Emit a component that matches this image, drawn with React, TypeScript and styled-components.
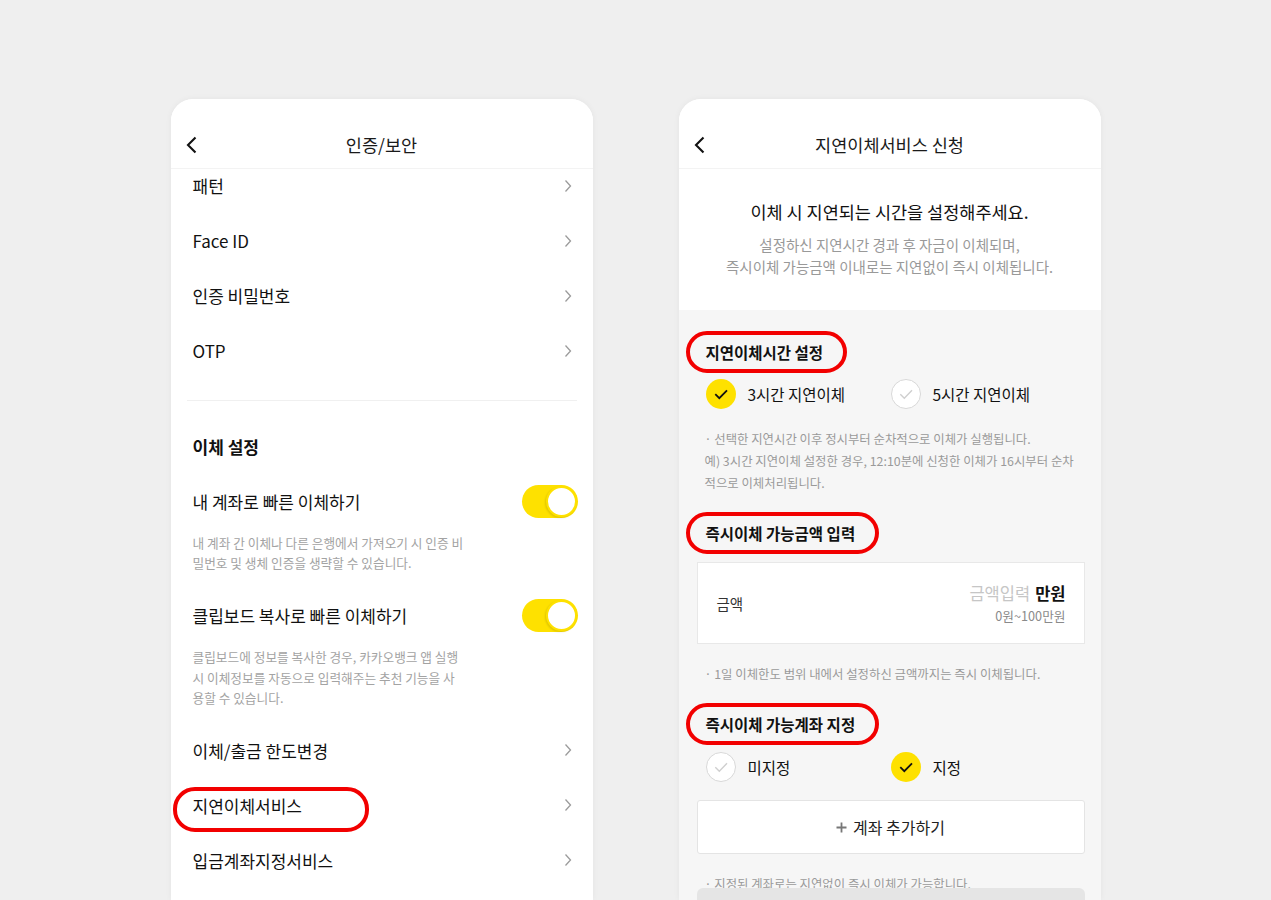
import React from "react";
import styled, { createGlobalStyle } from "styled-components";

const GlobalStyle = createGlobalStyle`
  html, body {
    margin: 0;
    padding: 0;
  }
  body {
    background: #efefef;
    font-family: "Noto Sans CJK KR", "Noto Sans", sans-serif;
    color: #111;
  }
`;

const YELLOW = "#fee100";

const BackIcon = () => (
  <svg width="13" height="18" viewBox="0 0 13 18" fill="none">
    <path d="M10.5 1.5 L3 9 L10.5 16.5" stroke="#111" strokeWidth="2.1" />
  </svg>
);

const ChevronIcon = () => (
  <svg width="8" height="14" viewBox="0 0 8 14" fill="none">
    <path d="M1.5 1.5 L6.5 7 L1.5 12.5" stroke="#9b9b9b" strokeWidth="1.3" />
  </svg>
);

const CheckIcon: React.FC<{ on: boolean }> = ({ on }) => (
  <svg width="30" height="30" viewBox="0 0 30 30" fill="none">
    <circle
      cx="15"
      cy="15"
      r={on ? 15 : 14.5}
      fill={on ? YELLOW : "#fff"}
      stroke={on ? "none" : "#d8d8d8"}
    />
    <path
      d="M9.3 15.2 L13.3 19.2 L21 11.3"
      stroke={on ? "#111" : "#cfcfcf"}
      strokeWidth={on ? 1.8 : 1.4}
    />
  </svg>
);

const PlusIcon = () => (
  <svg width="11" height="11" viewBox="0 0 11 11" fill="none">
    <path d="M5.5 0.5 V10.5 M0.5 5.5 H10.5" stroke="#777" strokeWidth="1.8" />
  </svg>
);

const Page = styled.div`
  display: flex;
  justify-content: center;
  gap: 86px;
  padding-top: 99px;
  height: 900px;
  box-sizing: border-box;
  overflow: hidden;
`;

const Phone = styled.div`
  position: relative;
  width: 422px;
  height: 801px;
  background: #fff;
  border-radius: 22px 22px 0 0;
  box-shadow: 0 0 6px rgba(0, 0, 0, 0.05);
  overflow: hidden;
  display: flex;
  flex-direction: column;
`;

const Header = styled.header`
  position: relative;
  z-index: 1;
  flex-shrink: 0;
  height: 70px;
  box-sizing: border-box;
  padding: 22px 14px 0;
  display: grid;
  grid-template-columns: 1fr auto 1fr;
  align-items: center;
  background: #fff;
  border-bottom: 1px solid #f3f3f3;
`;

const BackButton = styled.span`
  display: flex;
  justify-self: start;
`;

const Title = styled.h1`
  margin: 0;
  font-size: 17.5px;
  font-weight: 400;
  color: #1a1a1a;
`;

const Body = styled.div`
  flex: 1;
  overflow: hidden;
`;

const MenuList = styled.div`
  margin-top: -11px;
`;

const MenuRow = styled.div`
  position: relative;
  height: 55px;
  display: flex;
  align-items: center;
  justify-content: space-between;
  padding: 0 21px 0 22px;
  font-size: 17px;
  color: #111;
`;

const Divider = styled.hr`
  margin: 22px 16px 0;
  border: none;
  border-top: 1px solid #f0f0f0;
`;

const GroupTitle = styled.h2`
  margin: 18px 0 0;
  height: 55px;
  display: flex;
  align-items: center;
  padding: 0 22px;
  font-size: 17px;
  font-weight: 700;
  color: #111;
`;

const ToggleRow = styled(MenuRow)`
  padding-right: 15px;
`;

const Toggle = styled.span`
  position: relative;
  width: 56px;
  height: 33px;
  border-radius: 17px;
  background: ${YELLOW};

  &::after {
    content: "";
    position: absolute;
    right: 1px;
    top: 1px;
    width: 27px;
    height: 27px;
    border-radius: 50%;
    background: #fff;
    border: 2px solid ${YELLOW};
    box-shadow: -1px 1px 2px rgba(0, 0, 0, 0.12);
  }
`;

const Desc = styled.p<{ lh: number; mb: number }>`
  margin: 4px 0 ${(p) => p.mb}px;
  padding: 0 22px;
  font-size: 12.7px;
  line-height: ${(p) => p.lh}px;
  color: #a3a3a3;
`;

const Mark = styled.span`
  position: absolute;
  left: 2px;
  top: 9px;
  width: 196px;
  height: 45px;
  box-sizing: border-box;
  border: 4px solid #f20000;
  border-radius: 22px;
  pointer-events: none;
`;

/* right screen */

const Intro = styled.section`
  padding: 31px 20px 32px;
  text-align: center;
`;

const IntroTitle = styled.p`
  margin: 0;
  font-size: 17.5px;
  line-height: 24px;
  color: #111;
`;

const IntroSub = styled.p`
  margin: 10px 0 0;
  font-size: 14.5px;
  line-height: 22px;
  color: #999;
`;

const Gray = styled.div`
  position: relative;
  flex: 1;
  background: #f6f6f6;
  padding: 21px 16px 0 18px;
  display: flex;
  flex-direction: column;
`;

const SectionTitle = styled.h3<{ mt: number }>`
  align-self: flex-start;
  margin: ${(p) => p.mt}px 0 0 -11px;
  height: 42px;
  box-sizing: border-box;
  padding: 0 20px 0 16px;
  border: 4px solid #f20000;
  border-radius: 22px;
  display: flex;
  align-items: center;
  font-size: 15.5px;
  font-weight: 700;
  color: #111;
`;

const RadioGroup = styled.div<{ mt: number }>`
  margin-top: ${(p) => p.mt}px;
  padding-left: 9px;
  display: flex;
`;

const RadioOption = styled.label`
  width: 185px;
  display: flex;
  align-items: center;
  gap: 12px;
  font-size: 15.5px;
  color: #111;
`;

const Note = styled.p<{ mt: number }>`
  margin: ${(p) => p.mt}px 0 0;
  padding-left: 8px;
  font-size: 12.4px;
  line-height: 22px;
  color: #9a9a9a;
  white-space: nowrap;
`;

const AmountBox = styled.div`
  margin-top: 8px;
  height: 82px;
  box-sizing: border-box;
  background: #fff;
  border: 1px solid #e8e8e8;
  display: flex;
  align-items: center;
  justify-content: space-between;
  padding: 0 18px 0 19px;
`;

const AmountLabel = styled.span`
  font-size: 14.5px;
  color: #333;
`;

const AmountInput = styled.div`
  display: flex;
  flex-direction: column;
  align-items: flex-end;
  gap: 3px;
`;

const AmountValue = styled.span`
  font-size: 16.5px;
  line-height: 22px;
  color: #c6c6c6;

  b {
    margin-left: 5px;
    color: #111;
    font-weight: 700;
  }
`;

const AmountRange = styled.span`
  font-size: 12.7px;
  line-height: 18px;
  color: #8a8a8a;
`;

const AddButton = styled.button`
  margin-top: 18px;
  height: 54px;
  background: #fff;
  border: 1px solid #e4e4e4;
  border-radius: 3px;
  display: flex;
  align-items: center;
  justify-content: center;
  gap: 6px;
  font-family: inherit;
  font-size: 16px;
  color: #222;
`;

const BottomButton = styled.div`
  position: absolute;
  left: 18px;
  right: 16px;
  top: 578px;
  height: 50px;
  border-radius: 6px;
  background: #e5e5e5;
`;

const menuTop = ["패턴", "Face ID", "인증 비밀번호", "OTP"];
const menuBottom = ["이체/출금 한도변경", "지연이체서비스", "입금계좌지정서비스"];

const App: React.FC = () => (
  <>
    <GlobalStyle />
    <Page>
      <Phone>
        <Header>
          <BackButton>
            <BackIcon />
          </BackButton>
          <Title>인증/보안</Title>
        </Header>
        <Body>
          <MenuList>
            {menuTop.map((m) => (
              <MenuRow key={m}>
                {m}
                <ChevronIcon />
              </MenuRow>
            ))}
          </MenuList>
          <Divider />
          <GroupTitle>이체 설정</GroupTitle>
          <ToggleRow>
            내 계좌로 빠른 이체하기
            <Toggle />
          </ToggleRow>
          <Desc lh={20} mb={15}>
            내 계좌 간 이체나 다른 은행에서 가져오기 시 인증 비
            <br />
            밀번호 및 생체 인증을 생략할 수 있습니다.
          </Desc>
          <ToggleRow>
            클립보드 복사로 빠른 이체하기
            <Toggle />
          </ToggleRow>
          <Desc lh={20.5} mb={14}>
            클립보드에 정보를 복사한 경우, 카카오뱅크 앱 실행
            <br />
            시 이체정보를 자동으로 입력해주는 추천 기능을 사
            <br />
            용할 수 있습니다.
          </Desc>
          {menuBottom.map((m) => (
            <MenuRow key={m}>
              {m}
              <ChevronIcon />
              {m === "지연이체서비스" && <Mark />}
            </MenuRow>
          ))}
        </Body>
      </Phone>

      <Phone>
        <Header>
          <BackButton>
            <BackIcon />
          </BackButton>
          <Title>지연이체서비스 신청</Title>
        </Header>
        <Intro>
          <IntroTitle>이체 시 지연되는 시간을 설정해주세요.</IntroTitle>
          <IntroSub>
            설정하신 지연시간 경과 후 자금이 이체되며,
            <br />
            즉시이체 가능금액 이내로는 지연없이 즉시 이체됩니다.
          </IntroSub>
        </Intro>
        <Gray>
          <SectionTitle mt={0}>지연이체시간 설정</SectionTitle>
          <RadioGroup mt={6}>
            <RadioOption>
              <CheckIcon on />
              3시간 지연이체
            </RadioOption>
            <RadioOption>
              <CheckIcon on={false} />
              5시간 지연이체
            </RadioOption>
          </RadioGroup>
          <Note mt={19}>
            · 선택한 지연시간 이후 정시부터 순차적으로 이체가 실행됩니다.
            <br />
            예) 3시간 지연이체 설정한 경우, 12:10분에 신청한 이체가 16시부터 순차
            <br />
            적으로 이체처리됩니다.
          </Note>

          <SectionTitle mt={18}>즉시이체 가능금액 입력</SectionTitle>
          <AmountBox>
            <AmountLabel>금액</AmountLabel>
            <AmountInput>
              <AmountValue>
                금액입력<b>만원</b>
              </AmountValue>
              <AmountRange>0원~100만원</AmountRange>
            </AmountInput>
          </AmountBox>
          <Note mt={19}>· 1일 이체한도 범위 내에서 설정하신 금액까지는 즉시 이체됩니다.</Note>

          <SectionTitle mt={18}>즉시이체 가능계좌 지정</SectionTitle>
          <RadioGroup mt={7}>
            <RadioOption>
              <CheckIcon on={false} />
              미지정
            </RadioOption>
            <RadioOption>
              <CheckIcon on />
              지정
            </RadioOption>
          </RadioGroup>
          <AddButton>
            <PlusIcon />
            계좌 추가하기
          </AddButton>
          <Note mt={19}>· 지정된 계좌로는 지연없이 즉시 이체가 가능합니다.</Note>
          <BottomButton />
        </Gray>
      </Phone>
    </Page>
  </>
);

export default App;
